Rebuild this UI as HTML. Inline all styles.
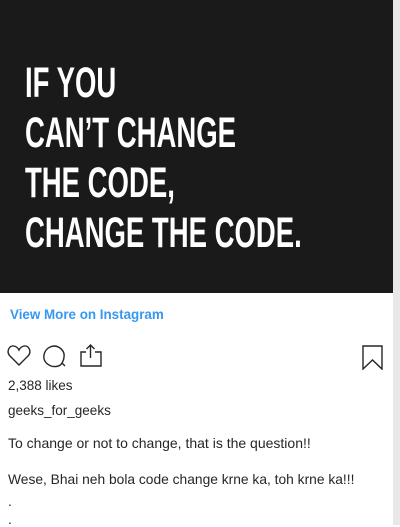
<!DOCTYPE html>
<html><head><style>
html,body{margin:0;padding:0;width:400px;height:525px;overflow:hidden;background:#fff;font-family:"Liberation Sans",sans-serif;}
.img{position:absolute;left:0;top:0;width:393px;height:293px;background:#1a1a1a;}
.sb{position:absolute;left:393px;top:0;width:7px;height:525px;background:#e8e8e8;}
.q{position:absolute;left:25px;color:#fff;font-family:"Liberation Sans Narrow","Liberation Sans",sans-serif;font-weight:bold;font-size:43px;line-height:50px;transform-origin:0 0;white-space:nowrap;}
.t{position:absolute;left:8px;font-size:13.8px;color:#262626;white-space:nowrap;}
</style></head><body>
<div class="img"></div>
<div class="sb"></div>
<div class="q" style="top:58px;transform:scaleX(0.64)">IF YOU<br>CAN’T CHANGE<br>THE CODE,<br>CHANGE THE CODE.</div>
<div class="t" style="top:307px;left:10px;color:#3897f0;font-weight:bold;font-size:13.4px">View More on Instagram</div>
<svg style="position:absolute;left:6px;top:343px" width="100" height="28" viewBox="0 0 100 28" fill="none" stroke="#262626" stroke-width="1.4">
<path d="M13 22 L4 13 C0 9 3 2 8 3 C10 3.5 12 5 13 7 C14 5 16 3.5 18 3 C23 2 26 9 22 13 Z"/>
<path d="M56 20 C54 24 48 24 45 23 C40 21 37 17 38 12 C39 6 44 3 49 3 C55 4 59 9 58 14 C58 17 57 18 56 20 L59 23 Z"/>
<path d="M84.5 15 V2 M80.5 6 L84.5 2 L88.5 6 M80 9 H75 V23 H95 V9 H89"/>
</svg>
<svg style="position:absolute;left:362px;top:345px" width="22" height="25" viewBox="0 0 22 25" fill="none" stroke="#262626" stroke-width="1.4">
<path d="M1 1 H20 V24 L10.5 15 L1 24 Z"/>
</svg>
<div class="t" style="top:378px;font-size:13.5px">2,388 likes</div>
<div class="t" style="top:403px;font-size:13.5px">geeks_for_geeks</div>
<div class="t" style="top:435px;font-size:14px">To change or not to change, that is the question!!</div>
<div class="t" style="top:472px">Wese, Bhai neh bola code change krne ka, toh krne ka!!!</div>
<div class="t" style="top:494px">.</div>
<div class="t" style="top:512px">.</div>
</body></html>
